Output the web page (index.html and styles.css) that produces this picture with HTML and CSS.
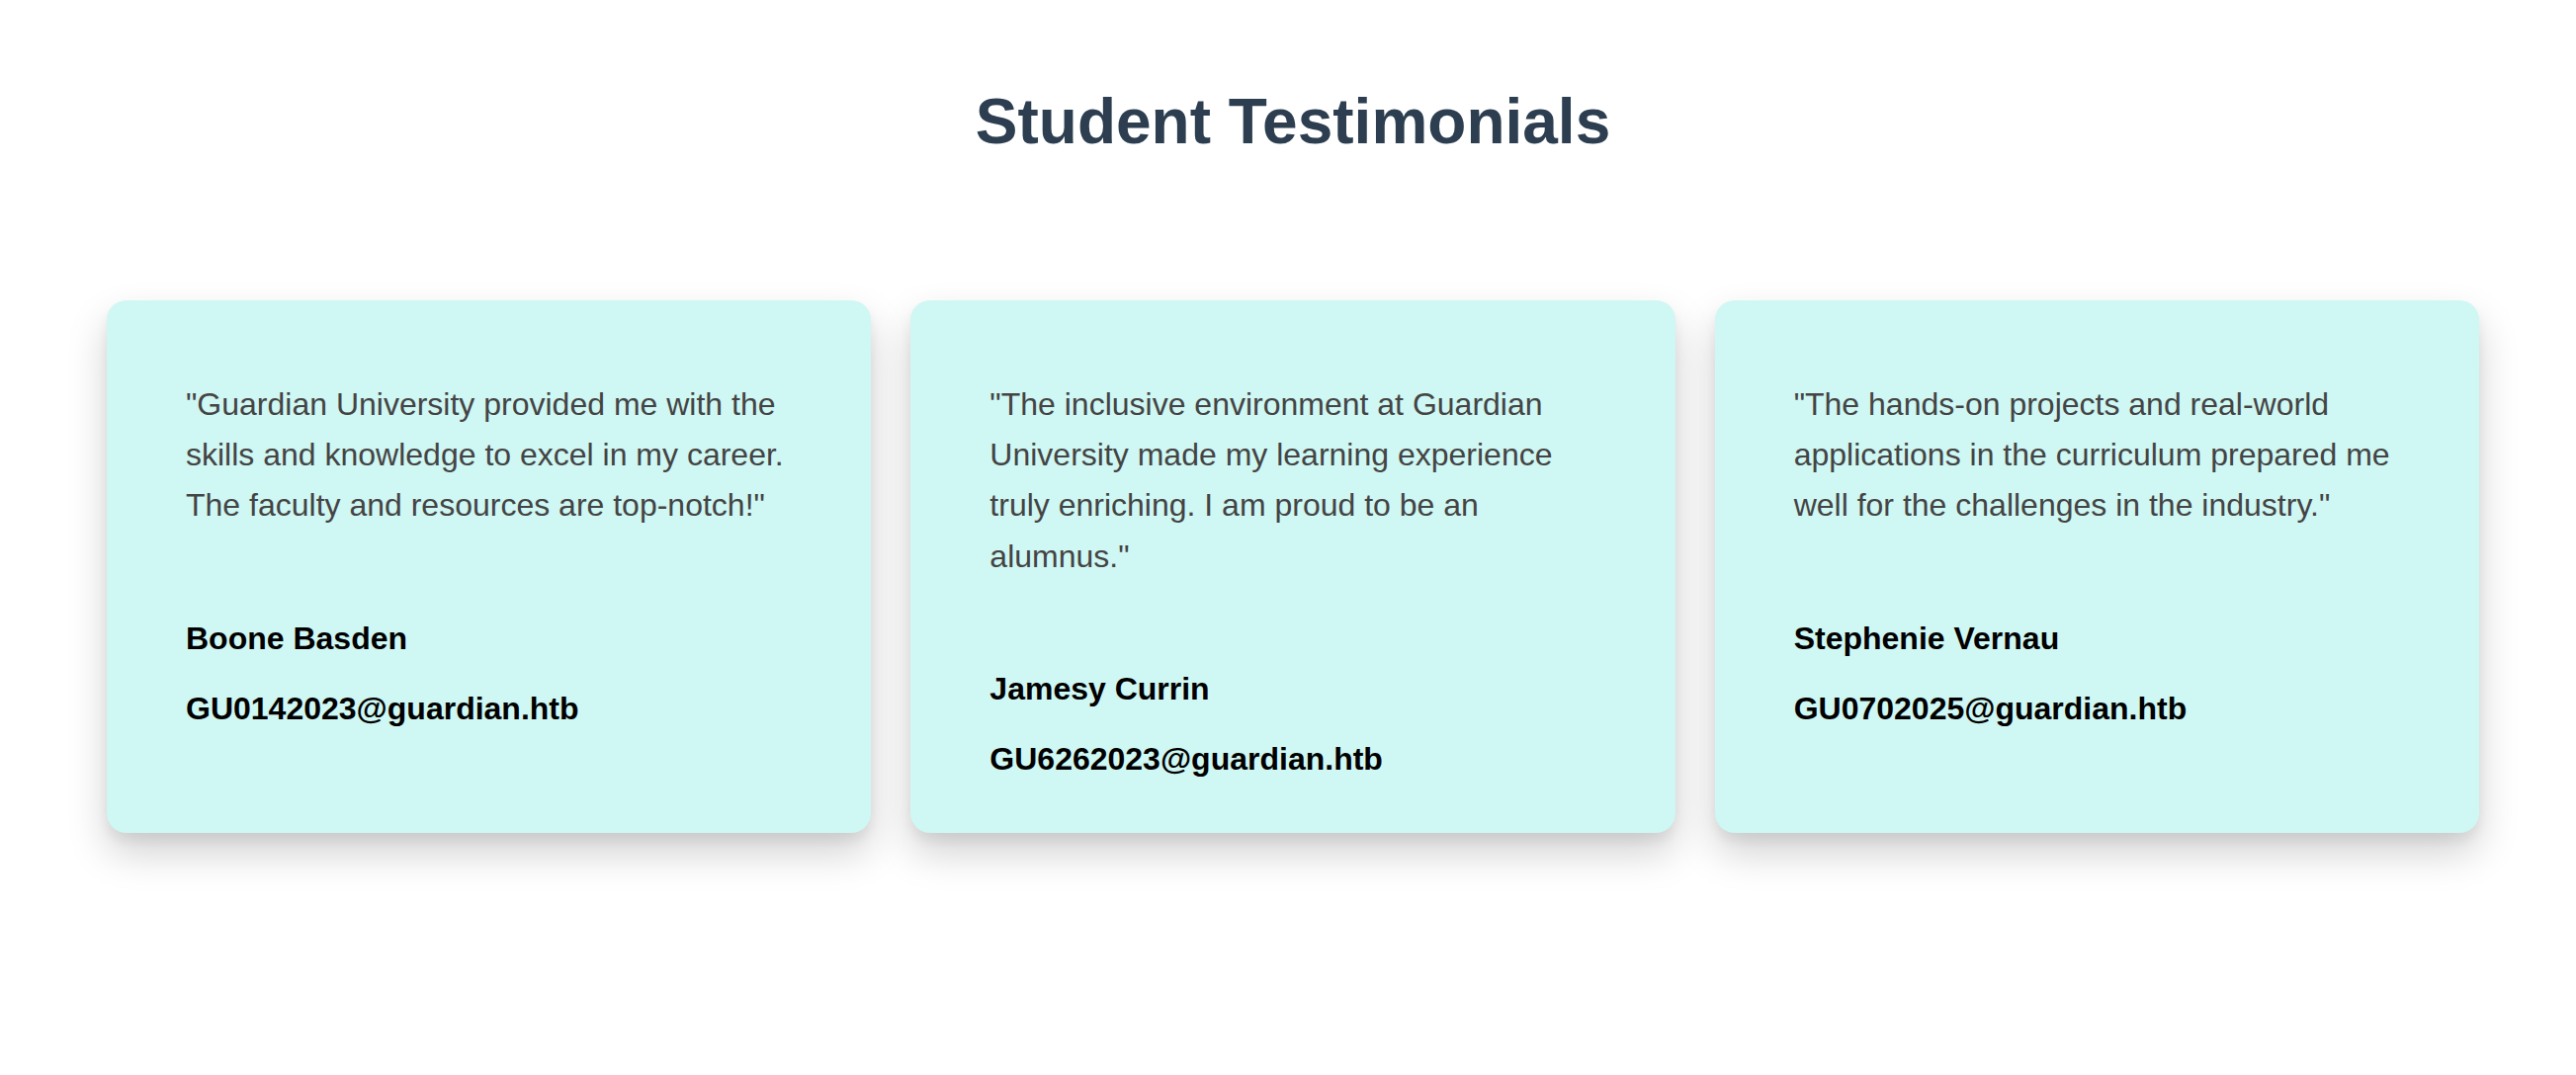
FILE: index.html
```html
<!DOCTYPE html>
<html lang="en">
<head>
<meta charset="utf-8">
<title>Student Testimonials</title>
<link rel="stylesheet" href="styles.css">
</head>
<body>
<section class="testimonials">
  <h1 class="title">Student Testimonials</h1>
  <div class="cards">
    <div class="card">
      <p class="quote">"Guardian University provided me with the skills and knowledge to excel in my career. The faculty and resources are top-notch!"</p>
      <p class="name">Boone Basden</p>
      <p class="email">GU0142023@guardian.htb</p>
    </div>
    <div class="card">
      <p class="quote">"The inclusive environment at Guardian University made my learning experience truly enriching. I am proud to be an alumnus."</p>
      <p class="name">Jamesy Currin</p>
      <p class="email">GU6262023@guardian.htb</p>
    </div>
    <div class="card">
      <p class="quote">"The hands-on projects and real-world applications in the curriculum prepared me well for the challenges in the industry."</p>
      <p class="name">Stephenie Vernau</p>
      <p class="email">GU0702025@guardian.htb</p>
    </div>
  </div>
</section>
</body>
</html>
```

FILE: styles.css
```css
html, body {
  margin: 0;
  padding: 0;
  background: #ffffff;
}

body {
  font-family: "Liberation Sans", Arial, sans-serif;
  font-size: 32px;
  line-height: 1.6;
  color: #333333;
  min-height: 1088px;
}

.testimonials {
  width: 2400px;
  margin-left: 108px;
  padding-top: 86px;
  padding-bottom: 200px;
}

.title {
  margin: 0 0 144px;
  font-size: 64px;
  line-height: 74px;
  font-weight: bold;
  color: #2c3e50;
  text-align: center;
}

.cards {
  display: grid;
  grid-template-columns: repeat(3, 1fr);
  gap: 40px;
  align-items: stretch;
}

.card {
  background: #cff7f3;
  border-radius: 20px;
  padding: 80px 80px 49px;
  box-shadow: 0 20px 40px rgba(0, 0, 0, 0.18), 0 8px 12px rgba(0, 0, 0, 0.06);
}

.quote {
  margin: 0 0 83px;
  font-size: 32px;
  line-height: 51.2px;
  color: #444444;
}

.name {
  margin: 0;
  font-weight: bold;
  line-height: 51.2px;
  color: #000000;
}

.email {
  margin: 20px 0 0;
  font-weight: bold;
  line-height: 51.2px;
  color: #000000;
}
```
